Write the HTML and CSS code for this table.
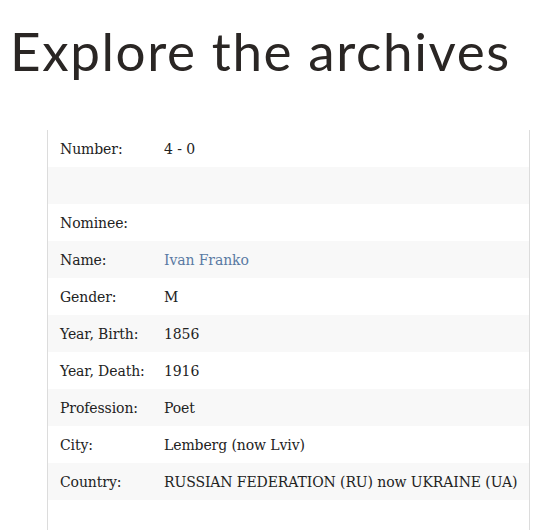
FILE: index.html
```html
<!DOCTYPE html>
<html>
<head>
<meta charset="utf-8">
<link rel="stylesheet" href="styles.css">
</head>
<body>
<h1 class="title">Explore the archives</h1>
<div class="panel">
  <div class="row"><span class="label">Number:</span><span class="value">4 - 0</span></div>
  <div class="row alt"><span class="label"></span><span class="value"></span></div>
  <div class="row"><span class="label">Nominee:</span><span class="value"></span></div>
  <div class="row alt"><span class="label">Name:</span><a class="value link" href="#">Ivan Franko</a></div>
  <div class="row"><span class="label">Gender:</span><span class="value">M</span></div>
  <div class="row alt"><span class="label">Year, Birth:</span><span class="value">1856</span></div>
  <div class="row"><span class="label">Year, Death:</span><span class="value">1916</span></div>
  <div class="row alt"><span class="label">Profession:</span><span class="value">Poet</span></div>
  <div class="row"><span class="label">City:</span><span class="value">Lemberg (now Lviv)</span></div>
  <div class="row alt"><span class="label">Country:</span><span class="value">RUSSIAN FEDERATION (RU) now UKRAINE (UA)</span></div>
  <div class="spacer"></div>
</div>
</body>
</html>
```
FILE: styles.css
```css
html, body {
  margin: 0;
  padding: 0;
  background: #fff;
}
body {
  overflow: hidden;
}
.title {
  margin: 0;
  padding: 19px 0 0 10px;
  height: 115px;
  box-sizing: border-box;
  font-family: Lato, "Open Sans", sans-serif;
  font-weight: 400;
  font-size: 53px;
  letter-spacing: 1.6px;
  line-height: 64px;
  color: #2a2624;
}
.panel {
  margin: 15px 14px 0 47px;
  border-left: 1px solid #dcdcdc;
  border-right: 1px solid #dcdcdc;
  font-family: "DejaVu Serif", serif;
  font-size: 14px;
  letter-spacing: -0.1px;
  color: #222;
}
.row {
  display: flex;
  align-items: center;
  height: 37px;
  padding-left: 12px;
}
.row.alt {
  background: #f8f8f8;
}
.label {
  width: 104px;
  flex: none;
}
.link {
  color: #5a7aa3;
  text-decoration: none;
}
.spacer {
  height: 40px;
}
```
